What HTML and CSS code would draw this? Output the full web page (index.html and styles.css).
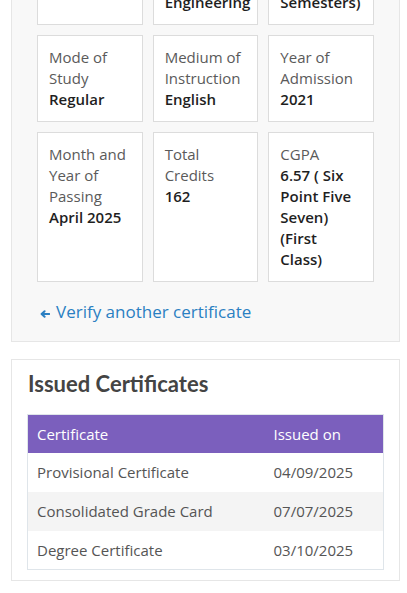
FILE: index.html
```html
<!DOCTYPE html>
<html lang="en">
<head>
<meta charset="utf-8">
<title>Certificate Verification</title>
<link rel="stylesheet" href="styles.css">
</head>
<body>
<main class="page">
  <section class="panel details">
    <div class="grid">
      <div class="card"><span class="label">Roll Number</span><span class="value">21B81A0512</span></div>
      <div class="card"><span class="label">Branch of Study</span><span class="value">Mechanical Engineering</span></div>
      <div class="card"><span class="label">Duration of Programme</span><span class="value">4 Years (8 Semesters)</span></div>

      <div class="card"><span class="label">Mode of Study</span><span class="value">Regular</span></div>
      <div class="card"><span class="label">Medium of Instruction</span><span class="value">English</span></div>
      <div class="card"><span class="label">Year of Admission</span><span class="value">2021</span></div>

      <div class="card"><span class="label">Month and Year of Passing</span><span class="value">April 2025</span></div>
      <div class="card"><span class="label">Total Credits</span><span class="value">162</span></div>
      <div class="card"><span class="label">CGPA</span><span class="value">6.57 ( Six Point Five Seven) (First Class)</span></div>
    </div>
    <a class="back-link" href="#">
      <svg class="back-icon" viewBox="0 0 10 8" aria-hidden="true"><path d="M4.6 1.2 L1.6 4 L4.6 6.8 M1.8 4 H9.4"/></svg>
      <span>Verify another certificate</span>
    </a>
  </section>

  <section class="panel issued">
    <h2 class="issued-title">Issued Certificates</h2>
    <table class="cert-table">
      <thead>
        <tr><th class="col-name">Certificate</th><th>Issued on</th></tr>
      </thead>
      <tbody>
        <tr><td>Provisional Certificate</td><td>04/09/2025</td></tr>
        <tr><td>Consolidated Grade Card</td><td>07/07/2025</td></tr>
        <tr><td>Degree Certificate</td><td>03/10/2025</td></tr>
      </tbody>
    </table>
  </section>
</main>
</body>
</html>
```

FILE: styles.css
```css
* { box-sizing: border-box; }

html, body {
  margin: 0;
  padding: 0;
  background: #ffffff;
}

body {
  font-family: "Open Sans", "Liberation Sans", sans-serif;
  color: #555555;
}

.page {
  padding: 0 7px 20px 11px;
}

.panel {
  border: 1px solid #e6e6e6;
}

.details {
  background: #f8f8f8;
  padding: 0 25px 17px;
  margin-top: -84px;
}

.grid {
  display: grid;
  grid-template-columns: repeat(3, minmax(0, 1fr));
  gap: 10px;
}

.card {
  background: #ffffff;
  border: 1px solid #dcdcdc;
  padding: 11px 11px;
  display: flex;
  flex-direction: column;
  font-size: 15px;
  line-height: 21px;
}

.label {
  color: #5a5a5a;
  font-weight: 400;
}

.value {
  color: #1f1f1f;
  font-weight: 600;
}

.back-link {
  display: flex;
  align-items: center;
  gap: 6px;
  margin-top: 18px;
  padding-left: 3px;
  line-height: 24px;
  font-size: 17px;
  color: #2a7fc2;
  text-decoration: none;
}

.back-icon {
  width: 10px;
  height: 8px;
  fill: none;
  stroke: #2a7fc2;
  stroke-width: 2;
  stroke-linecap: round;
  stroke-linejoin: round;
  margin-top: 4px;
}

.issued {
  margin-top: 17px;
  background: #ffffff;
  padding: 10px 15px 10px;
}

.issued-title {
  margin: 0 0 16px;
  padding-left: 1px;
  font-family: "Lato", "Open Sans", sans-serif;
  font-weight: 700;
  font-size: 22px;
  line-height: 28px;
  color: #444444;
}

.cert-table {
  width: 100%;
  border-collapse: collapse;
  border: 1px solid #dfe5ea;
  font-size: 15px;
}

.cert-table th,
.cert-table td {
  text-align: left;
  padding: 0 9px;
}

.cert-table th {
  background: #7b5fbd;
  color: #ffffff;
  font-weight: 500;
  height: 38px;
}

.cert-table .col-name {
  width: 237px;
}

.cert-table td {
  height: 39px;
  color: #555555;
}

.cert-table tbody tr:nth-child(2) td {
  background: #f4f4f4;
}
```
